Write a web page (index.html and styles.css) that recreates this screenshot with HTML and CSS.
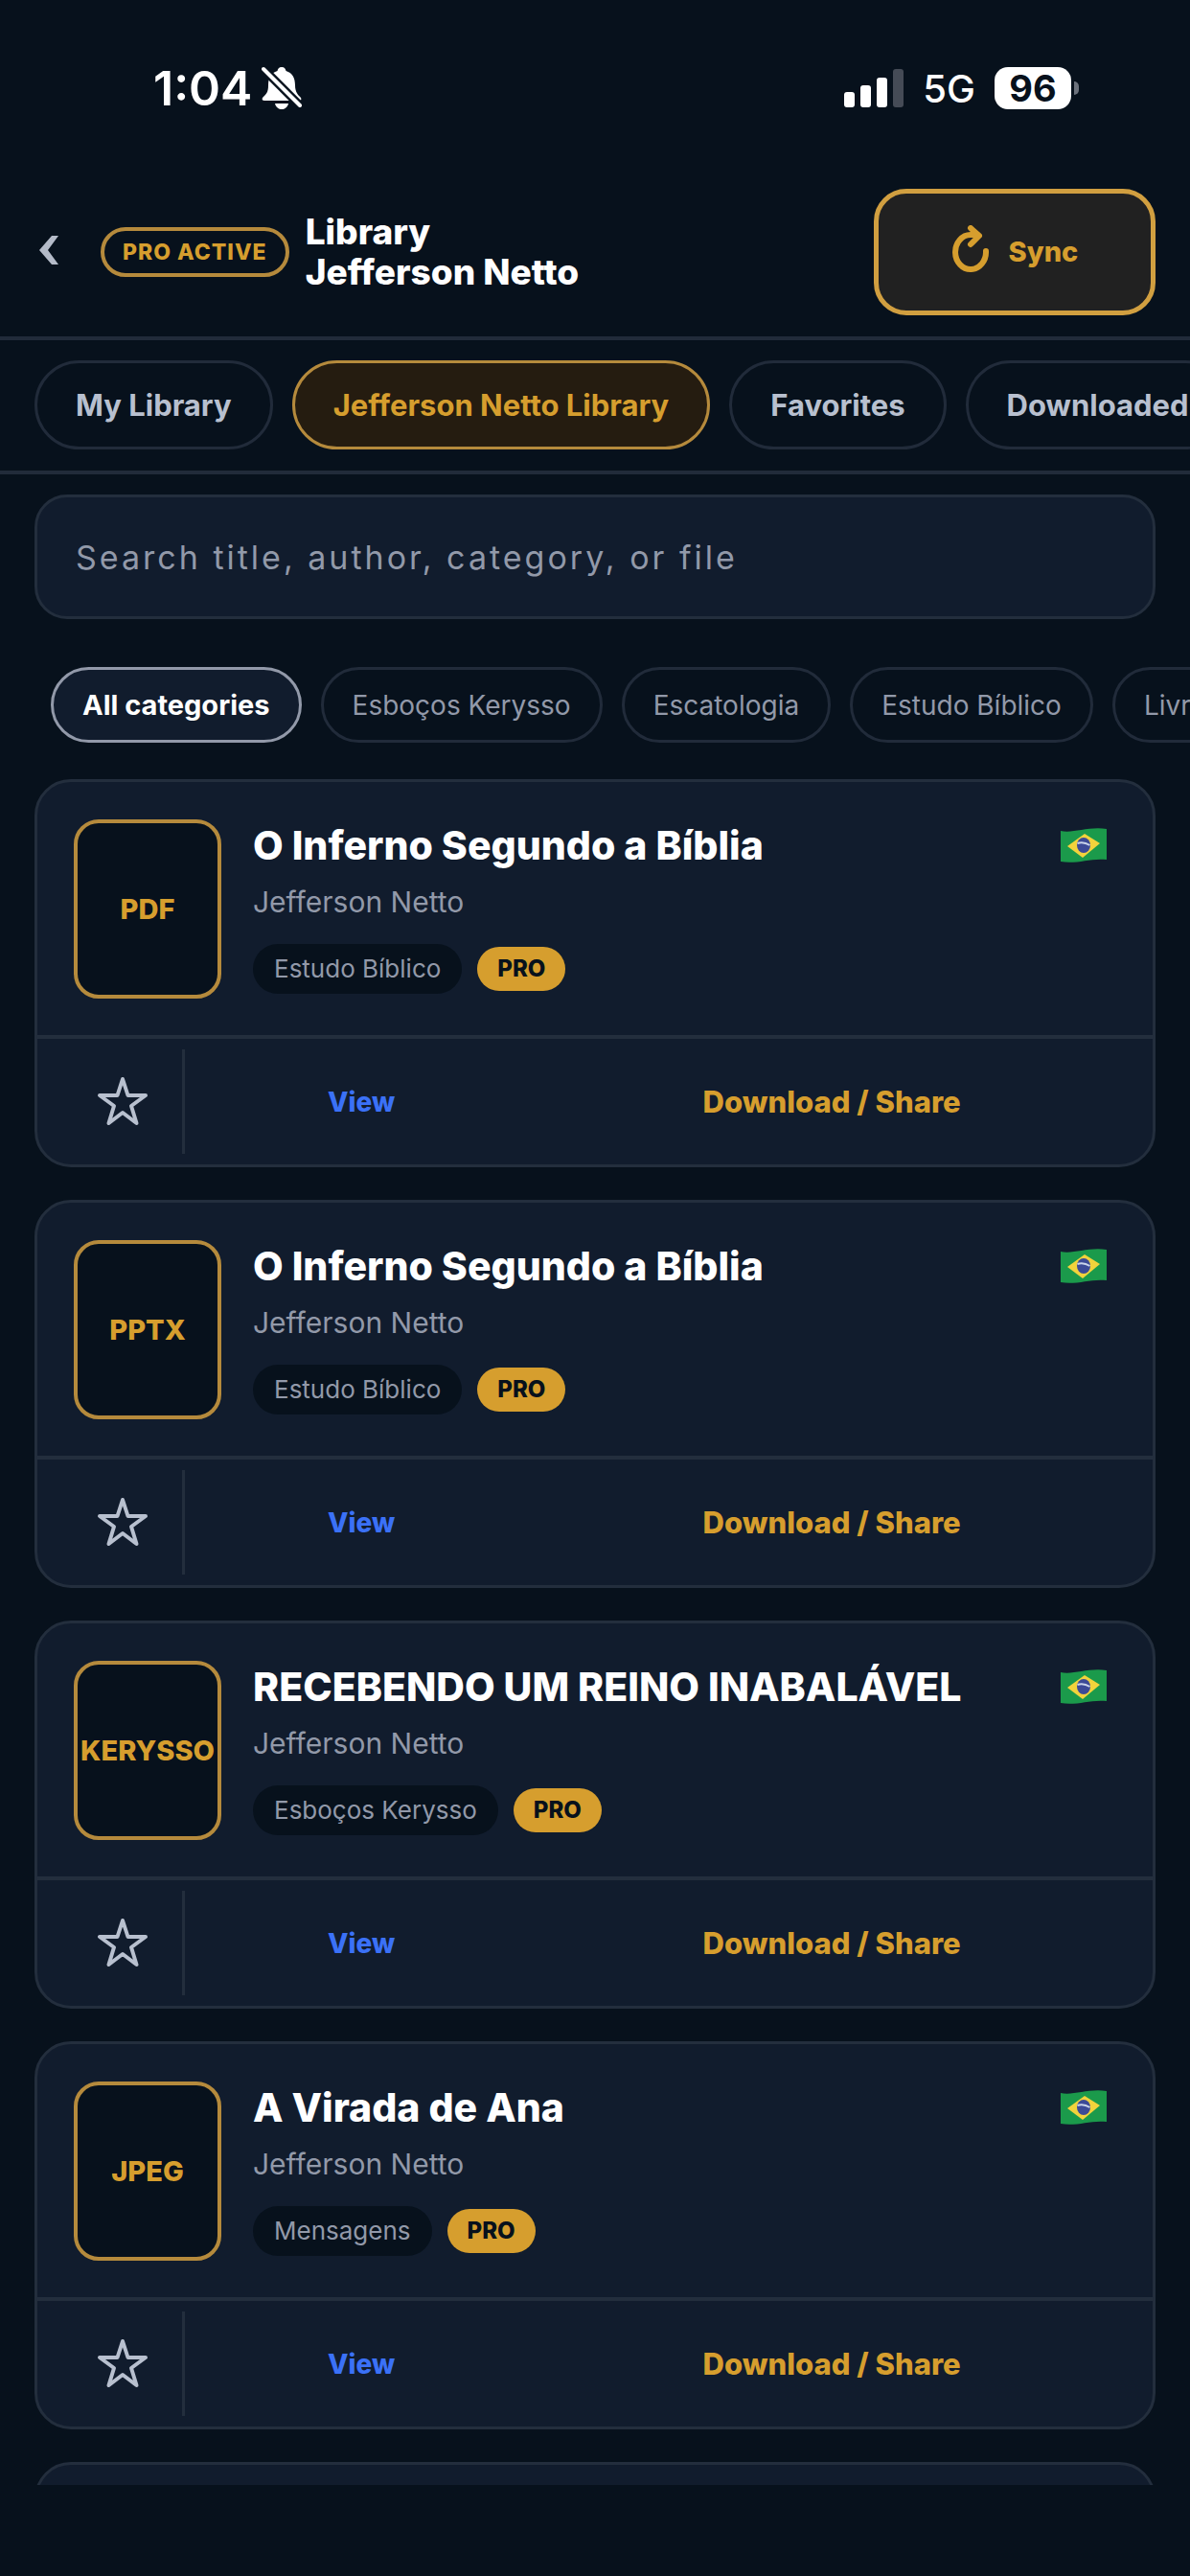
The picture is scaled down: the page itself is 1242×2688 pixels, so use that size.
FILE: index.html
```html
<!DOCTYPE html>
<html lang="en">
<head>
  <meta charset="utf-8">
  <meta name="viewport" content="width=device-width">
  <title>Library</title>
  <link rel="stylesheet" href="styles.css">
</head>
<body>
  <!-- shared icons -->
  <svg class="defs" width="0" height="0">
    <symbol id="star" viewBox="0 0 54 54">
      <path d="M27 3 L32.5 20 H51 L36 31 L41.5 49 L27 38 L12.500 49 L18 31 L3 20 H21.500 Z" fill="none" stroke="currentColor" stroke-width="4" stroke-linejoin="round"/>
    </symbol>
    <symbol id="flag" viewBox="0 0 50 36">
      <path d="M1 3 C14 6 30 -2 49 1 V33 C32 31 18 38 1 35 Z" fill="#1b9a4b"/>
      <path d="M8 19 L26 6 L42 16 L24 31 Z" fill="#f2d33c"/>
      <ellipse cx="25" cy="18" rx="7" ry="8" fill="#3c4a97"/>
      <path d="M18.500 16 Q25 14 31.500 18" fill="none" stroke="#c9d3ea" stroke-width="2"/>
    </symbol>
  </svg>

  <div class="status-bar">
    <div class="status-left">
      <span class="time">1:04</span>
      <svg class="bell" width="42" height="46" viewBox="0 0 42 46">
        <path d="M21 1 C24 1 25 3 25.500 5 C32 7 35 12 35 20 C35 27 38 30 41 33 C42 35 41 36 39 36 H3 C1 36 0 35 1 33 C5 29 7 27 7 20 C7 12 10 7 16.500 5 C17 3 18 1 21 1 Z" fill="#fff"/>
        <path d="M14 39 H28 C27 43 24 45 21 45 C18 45 15 43 14 39 Z" fill="#fff"/>
        <path d="M2 3 L41 42" stroke="#07111c" stroke-width="9"/>
        <path d="M2 3 L40 41" stroke="#fff" stroke-width="4" stroke-linecap="round"/>
      </svg>
    </div>
    <div class="status-right">
      <svg width="62" height="42" viewBox="0 0 62 42">
        <rect x="0" y="25" width="11" height="16" rx="3" fill="#fff"/>
        <rect x="17" y="18" width="11" height="23" rx="3" fill="#fff"/>
        <rect x="34" y="10" width="11" height="31" rx="3" fill="#fff"/>
        <rect x="51" y="1" width="11" height="40" rx="3" fill="#454b56"/>
      </svg>
      <span class="network">5G</span>
      <span class="battery">96</span>
    </div>
  </div>

  <header>
    <button class="back" aria-label="Back">
      <svg width="22" height="32" viewBox="0 0 22 32"><path d="M14 1 H21 L10 16 L21 31 H14 L1 16 Z" fill="#b4bbc8"/></svg>
    </button>
    <span class="pro-active">PRO ACTIVE</span>
    <h1>Library<br>Jefferson Netto</h1>
    <button class="sync">
      <svg width="40" height="56" viewBox="0 0 40 56">
        <path d="M36 27 A16 18 0 1 1 20 10 H27" fill="none" stroke="currentColor" stroke-width="6" stroke-linecap="round"/>
        <path d="M20 3 L29 11 L20 20" fill="none" stroke="currentColor" stroke-width="6" stroke-linecap="round" stroke-linejoin="round"/>
      </svg>
      Sync
    </button>
  </header>

  <nav class="tabs">
    <button>My Library</button>
    <button class="active">Jefferson Netto Library</button>
    <button>Favorites</button>
    <button>Downloaded</button>
  </nav>

  <main>
    <input class="search" type="search" aria-label="Search" placeholder="Search title, author, category, or file">

    <div class="categories">
      <button class="active">All categories</button>
      <button>Esboços Kerysso</button>
      <button>Escatologia</button>
      <button>Estudo Bíblico</button>
      <button>Livros</button>
    </div>

    <article class="card">
      <div class="info">
        <div class="thumb">PDF</div>
        <div class="details">
          <h2>O Inferno Segundo a Bíblia</h2>
          <p>Jefferson Netto</p>
          <div class="tags"><span class="tag">Estudo Bíblico</span><span class="pro">PRO</span></div>
        </div>
        <svg class="flag"><use href="#flag"/></svg>
      </div>
      <div class="actions">
        <button class="fav" aria-label="Favorite"><svg><use href="#star"/></svg></button>
        <button class="view">View</button>
        <button class="download">Download / Share</button>
      </div>
    </article>

    <article class="card">
      <div class="info">
        <div class="thumb">PPTX</div>
        <div class="details">
          <h2>O Inferno Segundo a Bíblia</h2>
          <p>Jefferson Netto</p>
          <div class="tags"><span class="tag">Estudo Bíblico</span><span class="pro">PRO</span></div>
        </div>
        <svg class="flag"><use href="#flag"/></svg>
      </div>
      <div class="actions">
        <button class="fav" aria-label="Favorite"><svg><use href="#star"/></svg></button>
        <button class="view">View</button>
        <button class="download">Download / Share</button>
      </div>
    </article>

    <article class="card">
      <div class="info">
        <div class="thumb">KERYSSO</div>
        <div class="details">
          <h2>RECEBENDO UM REINO INABALÁVEL</h2>
          <p>Jefferson Netto</p>
          <div class="tags"><span class="tag">Esboços Kerysso</span><span class="pro">PRO</span></div>
        </div>
        <svg class="flag"><use href="#flag"/></svg>
      </div>
      <div class="actions">
        <button class="fav" aria-label="Favorite"><svg><use href="#star"/></svg></button>
        <button class="view">View</button>
        <button class="download">Download / Share</button>
      </div>
    </article>

    <article class="card">
      <div class="info">
        <div class="thumb">JPEG</div>
        <div class="details">
          <h2>A Virada de Ana</h2>
          <p>Jefferson Netto</p>
          <div class="tags"><span class="tag">Mensagens</span><span class="pro">PRO</span></div>
        </div>
        <svg class="flag"><use href="#flag"/></svg>
      </div>
      <div class="actions">
        <button class="fav" aria-label="Favorite"><svg><use href="#star"/></svg></button>
        <button class="view">View</button>
        <button class="download">Download / Share</button>
      </div>
    </article>

    <!-- next item, cut off by the bottom safe area -->
    <article class="card next"></article>
  </main>
</body>
</html>
```
FILE: styles.css
```css
* {
  box-sizing: border-box;
}
body {
  font-family: Inter, 'Liberation Sans', sans-serif;
  background: #07111c;
  color: #fff;
  margin: 0;
  height: 100vh;
  padding-bottom: 95px;
  display: flex;
  flex-direction: column;
  overflow: hidden;
}
button {
  font-family: inherit;
  color: inherit;
  background: none;
  border: none;
  padding: 0;
  white-space: nowrap;
  cursor: pointer;
}
h1, h2, p {
  margin: 0;
}
.defs {
  position: absolute;
}

/* status bar */
.status-bar {
  display: flex;
  justify-content: space-between;
  align-items: center;
  flex-shrink: 0;
  padding: 64px 124px 0 160px;
  height: 120px;
}
.status-left, .status-right {
  display: flex;
  align-items: center;
}
.status-left {
  gap: 10px;
}
.status-right {
  gap: 20px;
}
.time {
  font-size: 50px;
  font-weight: 600;
}
.network {
  font-size: 40px;
  font-weight: 500;
}
.battery {
  position: relative;
  width: 80px;
  line-height: 44px;
  background: #fff;
  color: #07111c;
  border-radius: 14px;
  font-size: 38px;
  font-weight: 700;
  text-align: center;
}
.battery::after {
  content: "";
  position: absolute;
  left: 83px;
  top: 15px;
  width: 5px;
  height: 14px;
  background: #6c727c;
  border-radius: 0 5px 5px 0;
}

/* header */
header {
  display: flex;
  align-items: center;
  flex-shrink: 0;
  height: 235px;
  padding: 54px 36px 0 40px;
  border-bottom: 4px solid #212b3a;
}
.pro-active {
  margin: 0 17px 0 43px;
  padding: 0 19px;
  line-height: 44px;
  border: 4px solid #b58a3c;
  border-radius: 26px;
  color: #d69e2e;
  font-size: 23px;
  font-weight: 800;
  letter-spacing: 1px;
}
h1 {
  font-size: 37px;
  line-height: 42px;
  font-weight: 800;
}
.sync {
  display: flex;
  align-items: center;
  justify-content: center;
  gap: 20px;
  width: 294px;
  height: 132px;
  margin-left: auto;
  background: #212121;
  border: 5px solid #d19f40;
  border-radius: 34px;
  color: #d69e2e;
  font-size: 29px;
  font-weight: 800;
}

/* tabs */
.tabs {
  display: flex;
  flex-shrink: 0;
  gap: 20px;
  padding: 21px 0 22px 36px;
  border-bottom: 4px solid #212b3a;
  overflow: hidden;
}
.tabs button {
  flex-shrink: 0;
  height: 93px;
  padding: 0 40px;
  border: 3px solid #212b3a;
  border-radius: 47px;
  color: #b8c0cf;
  font-size: 31px;
  font-weight: 700;
}
.tabs .active {
  background: #251c10;
  border-color: #b58a3c;
  color: #d69e2e;
}

main {
  display: flex;
  flex-direction: column;
  flex: 1;
  min-height: 0;
  padding: 21px 36px 0;
  overflow: hidden;
}
.search {
  flex-shrink: 0;
  width: 100%;
  height: 130px;
  padding: 0 40px;
  background: #111c2d;
  border: 3px solid #232e3d;
  border-radius: 34px;
  color: #fff;
  font-family: inherit;
  font-size: 34px;
  letter-spacing: 3px;
}
.search::placeholder {
  color: #9299a9;
}

.categories {
  display: flex;
  flex-shrink: 0;
  gap: 20px;
  margin: 50px -36px 38px 0;
  padding-left: 17px;
  overflow: hidden;
}
.categories button {
  flex-shrink: 0;
  height: 79px;
  padding: 0 30px;
  border: 3px solid #212b3a;
  border-radius: 40px;
  color: #9299a9;
  font-size: 28px;
}
.categories .active {
  background: #111c2d;
  border-color: #9299a9;
  color: #fff;
  font-size: 29px;
  font-weight: 700;
}

/* cards */
.card {
  flex-shrink: 0;
  margin-bottom: 34px;
  background: #111c2d;
  border: 3px solid #232e3d;
  border-radius: 38px;
}
.next {
  height: 405px;
}
.info {
  display: flex;
  padding: 39px 47px 38px 38px;
}
.thumb {
  display: flex;
  align-items: center;
  justify-content: center;
  width: 154px;
  height: 187px;
  margin-right: 33px;
  background: #07111c;
  border: 4px solid #b58a3c;
  border-radius: 26px;
  color: #d69e2e;
  font-size: 29px;
  font-weight: 800;
}
.details {
  flex: 1;
}
h2 {
  font-size: 41px;
  line-height: 54px;
  font-weight: 800;
}
.details p {
  margin-top: 12px;
  color: #9299a9;
  font-size: 30px;
  line-height: 40px;
}
.tags {
  display: flex;
  align-items: center;
  gap: 16px;
  margin-top: 24px;
}
.tag {
  padding: 0 22px;
  background: #07111c;
  border-radius: 26px;
  color: #9299a9;
  font-size: 26px;
  line-height: 52px;
}
.pro {
  padding: 0 21px;
  background: #d69e2e;
  border-radius: 23px;
  color: #07111c;
  font-size: 24px;
  font-weight: 800;
  line-height: 46px;
}
.flag {
  width: 50px;
  height: 36px;
  margin-top: 9px;
}
.actions {
  display: flex;
  height: 135px;
  padding: 11px 28px 11px 26px;
  border-top: 4px solid #232e3d;
}
.actions button {
  font-size: 28px;
  font-weight: 800;
}
.fav {
  width: 128px;
  border-right: 3px solid #232e3d;
  color: #b8c0cf;
}
.fav svg {
  display: block;
  width: 54px;
  height: 54px;
  margin: 0 auto;
}
.actions .view {
  flex: 3;
  color: #3b71f7;
}
.actions .download {
  flex: 5;
  color: #d69e2e;
  font-size: 31px;
}
```
